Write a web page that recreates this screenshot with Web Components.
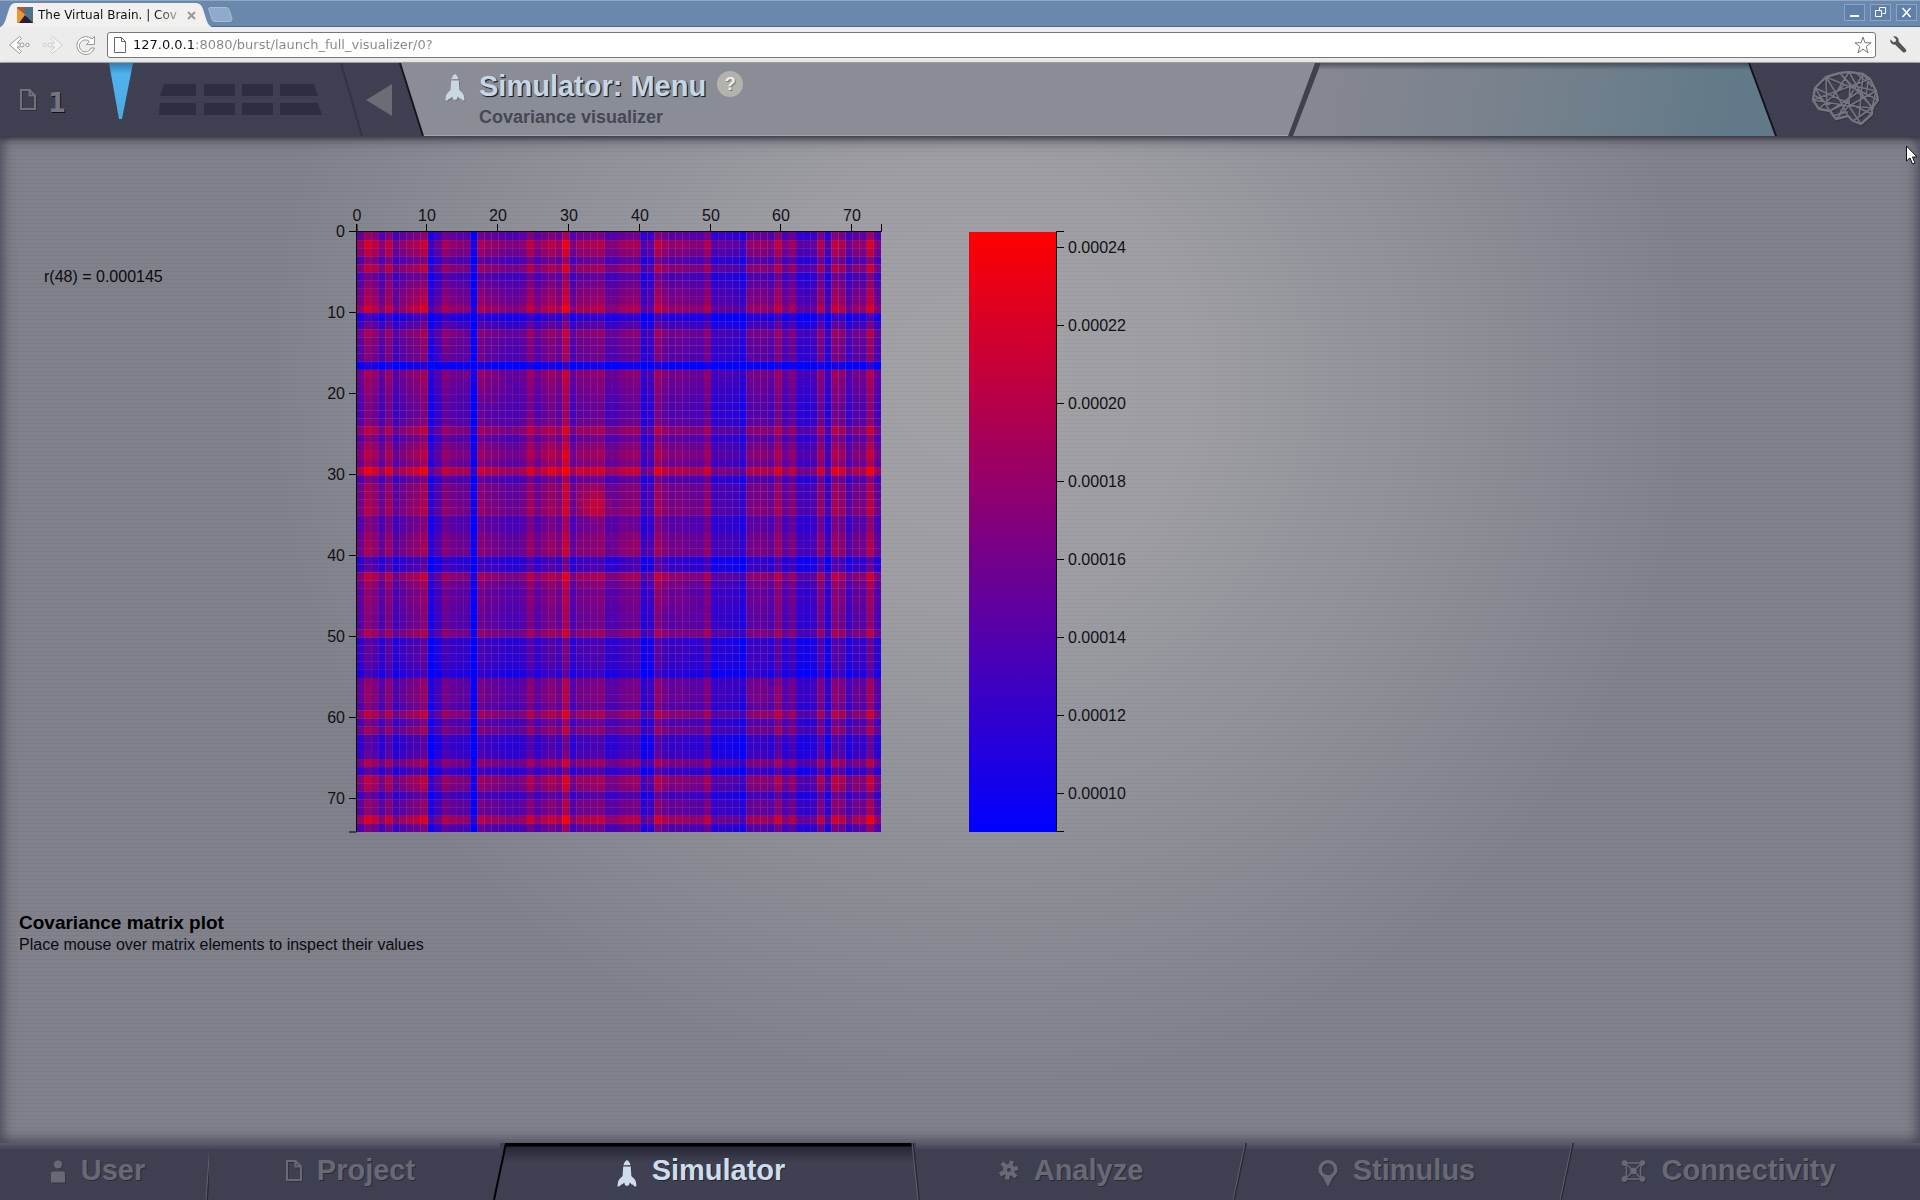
<!DOCTYPE html>
<html lang="en">
<head>
<meta charset="utf-8">
<title>The Virtual Brain. | Covariance visualizer</title>
<style>
html,body{margin:0;height:100%;overflow:hidden}
body{font-family:"Liberation Sans",Arial,sans-serif;font-size:16px;color:#0b0b0f;background:#3f4052}
</style>
</head>
<body>
<tvb-app></tvb-app>

<script>
const define = (name, html, setup) => customElements.define(name, class extends HTMLElement {
  connectedCallback() {
    if (this.shadowRoot) return;
    const t = document.createElement('template');
    t.innerHTML = html;
    this.attachShadow({ mode: 'open' }).append(t.content.cloneNode(true));
    if (setup) setup(this, this.shadowRoot);
  }
});

const ICONS = {
  rocket: '<svg viewBox="0 0 20 27" width="20" height="27"><path fill="currentColor" d="M10 0C8 1 7 3 6.500 5.200h7C13 3 12 1 10 0zM6.200 6.400h7.600L14.400 16c2 2 4 3.500 4.600 6l.6 4.400-2.600-.2-.8-1.400-1.600-.2-1.800-2-.8 2.600-1.400.4-.6 1.200-.6-1.200-1.400-.4-.8-2.600-1.800 2-1.600.2L3 26.200l-2.600.2L1 22c.6-2.500 2.600-4 4.600-6z"/></svg>',
  user: '<svg viewBox="0 0 16 23" width="16" height="23"><g fill="currentColor"><circle cx="8" cy="4.500" r="4"/><path d="M2.500 11.500h11L15 13v9.500H1V13z"/></g></svg>',
  page: '<svg viewBox="0 0 16 21" width="16" height="21"><path fill="none" stroke="currentColor" stroke-width="2" d="M1 1h8.500L15 6.500V20H1zM9.500 1v5.500H15"/></svg>',
  gear: '<svg viewBox="0 0 20 20" width="20" height="20"><g fill="none" stroke="currentColor"><circle cx="10" cy="10" r="4" stroke-width="4"/><path stroke-width="4.200" d="M11 6L13 1M14 9l5-1M13 13l4 4M9 14l-1 5.500M6 12l-5 2.500M7 7L3 3"/></g></svg>',
  pin: '<svg viewBox="0 0 20 27" width="20" height="27"><path fill="currentColor" fill-rule="evenodd" d="M10 0a9.500 9.500 0 0 1 9.500 9.500c0 4-3 6-5 8.500L10 27 5.500 18c-2-2.500-5-4.500-5-8.500A9.500 9.500 0 0 1 10 0zm0 3.300a6 6 0 1 0 0 12 6 6 0 0 0 0-12z"/></svg>',
  net: '<svg viewBox="0 0 25 22" width="25" height="22"><g fill="currentColor" stroke="currentColor"><path fill="none" stroke-width="1.400" d="M4 3h17M4 19h17M4 3c2 5 2 11 0 16M21 3c-2 5-2 11 0 16M4 3l17 16M21 3L4 19"/><circle cx="3.500" cy="3" r="2.400"/><circle cx="21.500" cy="3" r="2.400"/><circle cx="3.500" cy="19" r="2.400"/><circle cx="21.500" cy="19" r="2.400"/><circle cx="12.500" cy="11" r="2.800"/></g></svg>',
  brain: '<svg viewBox="0 0 68 55" width="68" height="55"><g fill="none" stroke="currentColor" stroke-width="1.600" stroke-linejoin="round"><path stroke-width="2.400" d="M37 1L51 3 58 8 64 20 66 29 60 37 60 43 49 53 41 50 36 45 24 48 18 40 7 38 1 29 3 17 14 6 28 2z"/><path d="M28 2L62 38M14 6l34 14 18 9M37 1L24 22 7 38M51 3L27 44M51 3L47 47M58 8L1 29M3 17l57 26M1 29l36 6 27-15M14 6l10 16 12 23M37 1l11 19 12 17M18 40l30-20M18 40l12-6 30 3M7 38l25-24M41 50l19-13M24 48l13-13 12 18M28 2l10 12 26 6M3 17l15 23M38 14l-1 21M44 2l12 10-2 12M52 4l8 12M60 37l4-17M20 45l16-4M2 24l16 10M14 6l1 28"/></g></svg>'
};
define('tvb-icon', '<style>:host{display:inline-flex}svg{display:block;filter:drop-shadow(1px 1px 0 rgba(0,0,0,.2))}</style>',
  (host, root) => root.innerHTML += ICONS[host.getAttribute('name')]);

define('browser-chrome', `
<style>
:host{display:block;font-family:"DejaVu Sans",sans-serif;font-size:12px;color:#111}
button{border:0;background:none;padding:0;margin:0;display:block}
svg{display:block}
.bar{height:27px;box-sizing:border-box;display:flex;align-items:flex-end;background:#6a88ae;border-top:1px solid #93a6bf;box-shadow:inset 0 -1px #4d6687}
.tab{display:flex;align-items:center;height:24px;width:212px;box-sizing:border-box;padding:0 16px 0 17px;background:#f1f0ef;
 clip-path:path("M0 24C5 22 5 18 9 6Q11 0 15 0H196Q201 0 203 6C207 18 207 22 212 24Z")}
.tab span{flex:1;margin-left:5px;white-space:nowrap;background:linear-gradient(90deg,#111 118px,#1111 148px);background-clip:text;color:transparent}
.new{width:25px;height:15px;margin:0 0 5px -4px}
.wins{display:flex;gap:5px;margin:0 3px 6px auto}
.wins button{width:21px;height:17px;box-sizing:border-box;border:1px solid #89a4c5;background:#6080a9;display:grid;place-items:center}
.tools{height:36px;box-sizing:border-box;display:flex;align-items:center;padding:0 13px 0 8px;background:#ececec;border-bottom:1px solid #aaa}
.tools>button{margin-right:12px}
.url{flex:1;display:flex;align-items:center;height:26px;box-sizing:border-box;border:1px solid #777;border-radius:3px;background:#fff;padding:0 3px 0 6px}
.tools>.reload{margin-right:11px}
input{flex:1;border:0;outline:0;padding:0;margin:0 0 0 7px;font:13px/20px "DejaVu Sans",sans-serif;background:linear-gradient(90deg,#111 62px,#858585 62px);background-clip:text;-webkit-background-clip:text;color:transparent}
.tools .wrench{margin:0 0 0 14px}
</style>
<div class="bar">
 <div class="tab">
  <svg width="16" height="16"><path fill="#4d7187" d="M0 0h16v16H0z"/><path fill="#ee9536" d="M0 1l10 8-6 7H0z"/><path fill="#be542e" d="M0 0h8L6 5 0 1z"/><path fill="#2b1d36" d="M8 8l8 8H2z"/></svg>
  <span>The Virtual Brain. | Cov</span>
  <button aria-label="Close tab"><svg width="9" height="9"><path stroke="#999" stroke-width="2" d="M1 1l7 7M8 1L1 8"/></svg></button>
 </div>
 <button class="new" aria-label="New tab"><svg width="25" height="15"><path fill="#8fabcc" stroke="#a7bdd6" d="M2 .5h16q2 0 3 2l3 9q0 3-2 3H7q-2 0-3-2L1 3Q0 .5 2 .5z"/></svg></button>
 <div class="wins">
  <button aria-label="Minimize"><svg width="11" height="11"><path fill="#fff" d="M1 8h9v2H1z"/></svg></button>
  <button aria-label="Restore"><svg width="11" height="11" fill="none" stroke="#fff"><path d="M4.500 3V.5h6v6H7.500M.5 3.500h6v6h-6z"/></svg></button>
  <button aria-label="Close"><svg width="11" height="11"><path stroke="#fff" stroke-width="1.600" d="M1.500 1l8 9M9.500 1l-8 9"/></svg></button>
 </div>
</div>
<div class="tools">
 <button aria-label="Back"><svg width="22" height="20" fill="#fff" stroke="#999"><path d="M11.500 1.500l2 2L9 8h3M9 12h3M9 12l4.500 4.500-2 2L1.500 10l10-8.500"/><circle cx="14" cy="10" r="2"/><circle cx="19.500" cy="10" r="1.700"/></svg></button>
 <button aria-label="Forward"><svg width="22" height="20" fill="#f4f4f4" stroke="#ccc"><path d="M10.500 1.500l-2 2L13 8h-3M13 12h-3M13 12l-4.500 4.500 2 2L20.500 10l-10-8.500"/><circle cx="8" cy="10" r="2"/><circle cx="2.500" cy="10" r="1.700"/></svg></button>
 <button class="reload" aria-label="Reload"><svg width="20" height="20" fill="#fff" stroke="#999"><path d="M18.500 1.500v8h-8l3-3A6 6 0 1 0 15 13h3.500A9 9 0 1 1 16 4z"/></svg></button>
 <div class="url">
  <svg width="12" height="16" fill="#fff" stroke="#666"><path d="M.5.5h7l4 4v11H.5zM7.500.5v4h4"/></svg>
  <input aria-label="Address" value="127.0.0.1:8080/burst/launch_full_visualizer/0?">
  <button aria-label="Bookmark"><svg width="18" height="18" fill="#fff" stroke="#777"><path d="M9 1l2 5.800h6l-4.800 3.700L14 17 9 13l-5 4 1.800-6.500L1 6.800h6z"/></svg></button>
 </div>
 <button class="wrench" aria-label="Settings"><svg width="17" height="17"><path fill="#555" d="M3.200.5l3 3-.7 2.200-2.200.6-3-3C-.3 6 1.500 9 5 8.600L13 16.200c2 1.200 4-.8 3-2.700L8.600 5.500C9.200 2 6.500-.3 3.200.5z"/></svg></button>
</div>`);

define('tvb-header', `
<style>
:host{display:flex;height:73px;color:#70717b;
 background:repeating-linear-gradient(#0000 0 3px,#0000000a 3px 4px),#3f4052;position:relative;z-index:2;box-shadow:0 2px 5px #0006}
svg{display:block;flex:none}
button{border:0;background:none;padding:0;margin:0;font:inherit;color:inherit}
.left{width:400px;box-sizing:border-box;display:flex;padding-left:20px}
.left>tvb-icon{margin-top:26px}
.left b{font:bold 26px/30px "DejaVu Sans",sans-serif;margin:25px 0 0 12px;width:61px;color:#74757e;text-shadow:1px 1px #111}
.grid{margin:21px 18px 0 26px}
.back{align-self:center;margin-left:2px}
.mid{flex:1;display:flex;margin-left:-1px;background:#14151f;clip-path:polygon(0 0,100% 0,100% 100%,23px 100%)}
.face{flex:1;display:flex;box-sizing:border-box;background:#8b8d96;clip-path:polygon(2px 0,100% 0,100% 100%,25px 100%);padding-left:46px;border-bottom:1px solid #a3a4aa}
.face>tvb-icon{margin-top:11px;color:#c9d7e3}
.txt{margin-left:14px}
.top{display:flex;align-items:flex-start}
h1{margin:5px 11px 0 0;font:bold 29px/36px "Liberation Sans",sans-serif;color:#c8d6e4;text-shadow:1px 1px 1px #15202c,1px 1px #23303d}
h2{margin:1px 0 0;font:bold 18px/24px "Liberation Sans",sans-serif;color:#454757}
.help{width:26px;height:26px;margin-top:8px;border-radius:50%;background:#b3b3ae;color:#eee;font:bold 18px/26px "Liberation Sans",sans-serif;text-shadow:1px 1px #777}
.edge{width:489px;margin-left:-29px;background:linear-gradient(90deg,#3f414d 50%,#10121c 50%);clip-path:polygon(27px 0,calc(100% - 27px) 0,100% 100%,0 100%);display:flex}
.status{flex:1;margin:0 2px 0 5px;background:linear-gradient(#23283488,#23283400 7px),linear-gradient(100deg,#868791 20px,#7b838e 180px,#6d7e8b 330px,#617988 440px,#617988);clip-path:polygon(28px 0,calc(100% - 27px) 0,100% 100%,0 100%)}
.logo{width:143px;box-sizing:border-box;padding:8px 0 0 35px;color:#74757f}
</style>
<div class="left">
 <tvb-icon name="page"></tvb-icon><b>1</b>
 <svg width="24" height="58"><defs><linearGradient id="b" y2="1" x2="0"><stop stop-color="#2f7eb0"/><stop offset=".2" stop-color="#4fb3ee"/><stop offset="1" stop-color="#4fa9dc"/></linearGradient></defs><path fill="url(#b)" d="M0 0h24L13 56h-3z"/></svg>
 <svg class="grid" width="163" height="32" fill="#2d2e42"><path d="M5 0h32v12H1zM45 0h31v12H45zM83 0h31v12H83zM121 0h34l4 12h-38zM1 19h36v12H0zM45 19h31v12H45zM83 19h31v12H83zM121 19h38l4 12h-42z"/></svg>
 <svg width="24" height="73"><path stroke="#323344" stroke-width="2" d="M1 0l21 73"/></svg>
 <button class="back" aria-label="Back"><svg width="26" height="32"><path fill="#6b6c75" d="M26 0v32L0 16z"/></svg></button>
</div>
<div class="mid"><div class="face">
 <tvb-icon name="rocket"></tvb-icon>
 <div class="txt"><div class="top"><h1>Simulator: Menu</h1><button class="help">?</button></div><h2>Covariance visualizer</h2></div>
</div></div>
<div class="edge"><div class="status"></div></div>
<div class="logo"><tvb-icon name="brain"></tvb-icon></div>`);

/* Relative strength of each of the 74 regions, read as red share against a strong region. */
const STRENGTH = [.48,.8,.68,.42,.72,.36,.48,.6,.66,.82,.08,.3,.6,.5,.46,.44,-.1,.62,.55,.5,.45,.4,.4,.46,.74,.46,.62,.72,.58,1,.4,.6,.6,.64,.68,
 .42,.44,.56,.6,.62,.18,.24,.76,.58,.48,.52,.48,.44,.44,.66,.2,.26,.24,.2,.1,.5,.52,.52,.42,.74,.38,.58,.22,.2,.26,.66,.2,.74,.66,.3,.52,.48,.88,.4];

define('covariance-plot', `
<style>:host{display:block}.plot{display:block;width:840px;height:660px;font:16px "Liberation Sans",Arial,sans-serif}
.axis{fill:none;stroke:#000}text{fill:#111116}.t{text-anchor:middle}.l{text-anchor:end}</style>
<svg class="plot" role="img" aria-label="Covariance matrix"><defs><linearGradient id="g" x2="0" y2="1"><stop stop-color="#f00"/><stop offset="1" stop-color="#00f"/></linearGradient></defs>
<svg x="37" y="36" width="524" height="600" viewBox="0 0 74 74" preserveAspectRatio="none"><g id="cells"></g></svg>
<rect x="649" y="36" width="87" height="600" fill="url(#g)"/><g id="axes"></g></svg>`,
(host, root) => {
  const n = 74, w = STRENGTH.map(t => (1 + 1.72 * (.5 + (t - .5) * .72)) / 1.47);
  let cells = '', axes = '', path = 'M37 28V35.500H561.500V28M29 35.500H36.500V636H29';
  for (let i = 0; i < n; i++) for (let j = 0; j < n; j++) {
    let t = (w[i] * w[j] - 1) / 1.72 + .04;
    if (Math.abs(i - j) < 3) t += .04;
    t += .16 * Math.exp(-((i - 33) ** 2 + (j - 33) ** 2) / 3);
    t = Math.max(0, Math.min(1, t));
    cells += `<rect x="${j}" y="${i}" width="1" height="1" fill="rgb(${Math.round(255 * t)},0,${Math.round(255 * (1 - t))})"/>`;
  }
  for (let k = 0; k <= 70; k += 10) {
    const x = Math.floor(37 + k * 524 / n), y = Math.floor(36 + k * 600 / n);
    path += `M${x - .5} 28v8M29 ${y - .5}h8`;
    axes += `<text class="t" x="${x}" y="25">${k}</text><text class="l" x="25" y="${y + 5}">${k}</text>`;
  }
  path += 'M744 35.500H736.500V635.500H744';
  for (let k = 0; k < 8; k++) {
    const y = 51 + k * 78;
    path += `M736 ${y + .5}h8`;
    axes += `<text x="748" y="${y + 6}">0.000${24 - 2 * k}</text>`;
  }
  root.getElementById('cells').innerHTML = cells;
  root.getElementById('axes').innerHTML = `<path class="axis" d="${path}"/>` + axes;
});

define('tvb-visualizer', `
<style>
:host{display:block;flex:1;min-height:0;overflow:hidden;
 background:repeating-linear-gradient(#0000 0 3px,#00000009 3px 4px),radial-gradient(circle 720px at 51% 24%,#a2a2a7 0,#9e9ea4 30%,#91929a 60%,#858790 88%,#80818b 100%);
 box-shadow:inset 0 0 14px 2px #3f4052}
.view{display:grid;grid-template-columns:320px 1fr;padding-top:60px}
output{padding:72px 0 0 44px;line-height:18px}
section{padding:56px 19px 0}
h3{margin:0;font:bold 19px/22px "Liberation Sans",sans-serif;color:#000}
p{margin:0;line-height:22px}
</style>
<div class="view"><output>r(48) = 0.000145</output><covariance-plot></covariance-plot></div>
<section><h3>Covariance matrix plot</h3><p>Place mouse over matrix elements to inspect their values</p></section>`);

define('nav-tab', `
<style>
:host{display:flex;min-width:0;height:57px;color:#686974;
 background:repeating-linear-gradient(#0000 0 3px,#0000000a 3px 4px),linear-gradient(#5b5c6b,#3f4052 7px)}
:host([active]){color:#cfdcea;background:linear-gradient(#000 3px,#272835 4px,#3f4052 20px);clip-path:polygon(6px 0,calc(100% - 3px) 0,calc(100% + 10px) 100%,-6px 100%)}
a{flex:1;display:flex;justify-content:center;gap:15px;padding:17px var(--end,14px) 0 0;box-sizing:border-box;color:inherit;text-decoration:none;font:bold 29px/1 "Liberation Sans",sans-serif}
.label{line-height:34px;margin-top:-7px;text-shadow:1px 1px #2a2b38}
:host([active]) .label{text-shadow:1px 1px #23242f}
.slash{display:none}
:host([slant]) .slash{display:block;width:14px;height:57px;margin:0 -7px 0 -7px;position:relative;z-index:1}
</style>
<a href="#"><span class="label"><slot></slot></span></a>
<svg class="slash" viewBox="0 0 14 57" preserveAspectRatio="none"><path class="d" fill="none" stroke="#292a38" stroke-width="2"/><path class="h" fill="none" stroke="#60616f"/></svg>`,
(host, root) => {
  const icon = document.createElement('tvb-icon');
  icon.setAttribute('name', host.getAttribute('icon'));
  root.querySelector('a').prepend(icon);
  const lean = +host.getAttribute('slant');
  root.querySelector('.d').setAttribute('d', `M${7 + lean} 0L${7 - lean} 57`);
  root.querySelector('.h').setAttribute('d', `M${6 + lean} 0L${6 - lean} 57`);
  if (host.hasAttribute('strong')) { root.querySelector('.d').setAttribute('stroke', '#000'); root.querySelector('.h').remove(); }
});

define('tvb-nav', `
<style>nav{display:grid;grid-template-columns:209fr 291fr 416fr 324fr 327fr 353fr;background:#3f4052}
nav-tab:nth-child(2){z-index:1;--end:8px}nav-tab:last-child{--end:30px}</style>
<nav>
<nav-tab icon="user" slant="2">User</nav-tab><nav-tab icon="page" slant="6" strong>Project</nav-tab>
<nav-tab icon="rocket" slant="-3" active>Simulator</nav-tab><nav-tab icon="gear" slant="6">Analyze</nav-tab>
<nav-tab icon="pin" slant="6">Stimulus</nav-tab><nav-tab icon="net">Connectivity</nav-tab>
</nav>`);

define('tvb-app', `
<style>:host{display:flex;flex-direction:column;height:100vh}
.cursor{position:absolute;right:2px;top:145px;z-index:3}</style>
<browser-chrome></browser-chrome><tvb-header></tvb-header><tvb-visualizer></tvb-visualizer><tvb-nav></tvb-nav>
<svg class="cursor" width="12" height="20"><path fill="#fff" stroke="#111" d="M.5 1v15l3.500-3 2.500 6 2.500-1-2.500-6H11z"/></svg>`);
</script>
</body>
</html>
